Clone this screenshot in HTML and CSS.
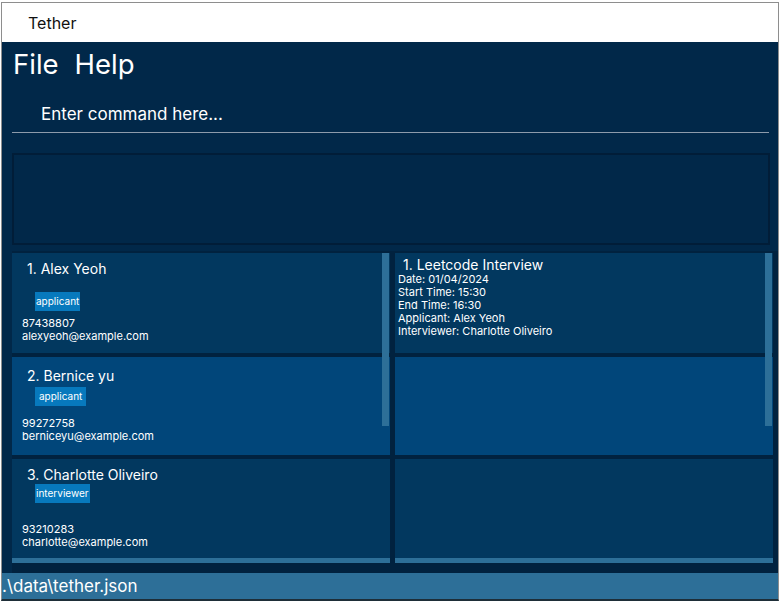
FILE: index.html
```html
<!DOCTYPE html>
<html>
<head>
<meta charset="utf-8">
<link rel="stylesheet" href="styles.css">
</head>
<body>
<div class="frame">
  <div class="titlebar">Tether</div>
  <div class="main">
    <div class="menubar"><span class="menu">File</span><span class="menu">Help</span></div>
    <div class="command"><span class="cmdtext">Enter command here...</span></div>
    <div class="result"></div>
    <div class="lists">
      <div class="list left">
        <div class="card c1">
          <div class="name">1. Alex Yeoh</div>
          <div class="tags t1"><span class="tag">applicant</span></div>
          <div class="info">87438807</div>
          <div class="info">alexyeoh@example.com</div>
        </div>
        <div class="card sel c2">
          <div class="name">2. Bernice yu</div>
          <div class="tags t2"><span class="tag">applicant</span></div>
          <div class="info">99272758</div>
          <div class="info">berniceyu@example.com</div>
        </div>
        <div class="card last c3">
          <div class="name">3. Charlotte Oliveiro</div>
          <div class="tags t3"><span class="tag">interviewer</span></div>
          <div class="info">93210283</div>
          <div class="info">charlotte@example.com</div>
        </div>
        <div class="hscroll"></div>
        <div class="vscroll"></div>
      </div>
      <div class="list right">
        <div class="card icard">
          <div class="iname">1. Leetcode Interview</div>
          <div class="iinfo">Date: 01/04/2024</div>
          <div class="iinfo">Start Time: 15:30</div>
          <div class="iinfo">End Time: 16:30</div>
          <div class="iinfo">Applicant: Alex Yeoh</div>
          <div class="iinfo">Interviewer: Charlotte Oliveiro</div>
        </div>
        <div class="card sel"></div>
        <div class="card last"></div>
        <div class="hscroll"></div>
        <div class="vscroll"></div>
      </div>
    </div>
  </div>
  <div class="status">.\data\tether.json</div>
</div>
</body>
</html>
```
FILE: styles.css
```css
* { box-sizing: border-box; }
html, body { margin: 0; padding: 0; background: #ffffff; }
body { font-family: Inter, "Open Sans", "Liberation Sans", sans-serif; }
.frame {
  margin: 2px 2px 0 1px;
  width: 778px;
  height: 599px;
  border: 1px solid #8e8e8e;
  border-bottom: 2px solid #1e2e38;
  display: flex;
  flex-direction: column;
  background: #012849;
}
.titlebar {
  height: 39px;
  background: #ffffff;
  color: #111;
  font-size: 16px;
  line-height: 40px;
  padding-left: 26px;
  flex: none;
}
.main {
  flex: 1;
  background: #012849;
  display: flex;
  flex-direction: column;
  align-items: flex-start;
  padding: 0 4px 0 10px;
}
.menubar {
  height: 44px;
  display: flex;
  gap: 16px;
  align-items: center;
  padding-left: 1px;
  padding-bottom: 1px;
}
.menu { color: #fff; font-size: 27.5px; line-height: 32px; }
.command {
  width: 757px;
  height: 47px;
  border-bottom: 1px solid #8d9bab;
  padding-left: 29px;
  padding-top: 17px;
}
.cmdtext { color: #fff; font-size: 17px; line-height: 22px; }
.result {
  margin-top: 20px;
  width: 758px;
  height: 92px;
  border: 2px solid #011d38;
  background: #012849;
}
.lists {
  margin-top: 6px;
  display: flex;
  background: #01223f;
  width: 766px;
  height: 322px;
  padding: 2px 0 0 0;
}
.list {
  position: relative;
  display: flex;
  flex-direction: column;
  gap: 4px;
}
.left { width: 378px; }
.right { width: 378px; margin-left: 5px; }
.card {
  background: #02385f;
  height: 100px;
  flex: none;
}
.card.sel { background: #01467a; height: 98px; }
.card.last { height: 99px; }
.left .card { padding: 8px 0 0 10px; }
.left .card.c2 { padding-top: 11px; }
.name { color: #fff; font-size: 14px; line-height: 16px; padding-left: 5px; }
.tags { display: flex; padding-left: 13px; }
.tag {
  display: block;
  background: #0779bd;
  color: #fff;
  font-size: 10px;
  line-height: 19px;
  height: 19px;
  padding: 0 1px;
}
.t1 { margin-top: 15px; margin-bottom: 6px; }
.t2 { margin-top: 3px; margin-bottom: 11px; }
.t2 .tag { padding: 0 4px; }
.t3 { margin-top: 1px; margin-bottom: 20px; }
.info { color: #fff; font-size: 11px; line-height: 13px; }
.icard { padding: 4px 0 0 3px; }
.iname { color: #fff; font-size: 14px; line-height: 16px; padding-left: 5px; }
.iinfo { color: #fff; font-size: 11px; line-height: 13px; }
.hscroll {
  height: 5px;
  background: #2d6f98;
  margin-top: -4px;
}
.vscroll {
  position: absolute;
  top: 0;
  right: 1px;
  width: 7px;
  height: 173px;
  background: #2d6f98;
}
.status {
  flex: none;
  height: 26px;
  background: #2d6f98;
  color: #fff;
  font-size: 17px;
  line-height: 26px;
}
```
